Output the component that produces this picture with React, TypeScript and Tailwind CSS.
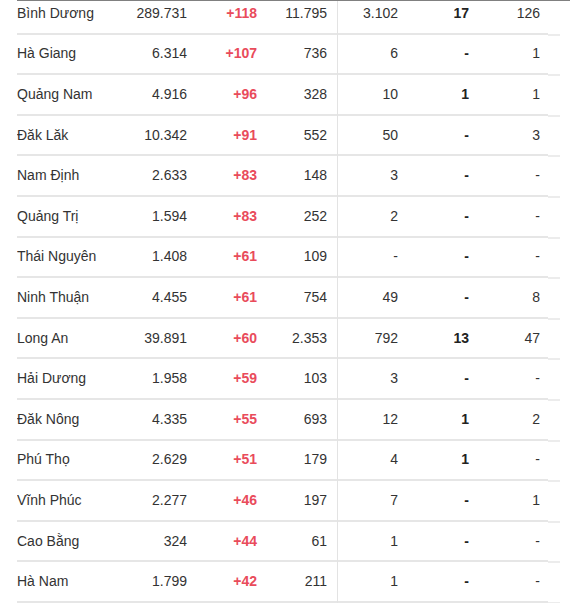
import React from "react";

type Row = [string, string, string, string, string, string, string];

const rows: Row[] = [
  ["Bình Dương", "289.731", "+118", "11.795", "3.102", "17", "126"],
  ["Hà Giang", "6.314", "+107", "736", "6", "-", "1"],
  ["Quảng Nam", "4.916", "+96", "328", "10", "1", "1"],
  ["Đăk Lăk", "10.342", "+91", "552", "50", "-", "3"],
  ["Nam Định", "2.633", "+83", "148", "3", "-", "-"],
  ["Quảng Trị", "1.594", "+83", "252", "2", "-", "-"],
  ["Thái Nguyên", "1.408", "+61", "109", "-", "-", "-"],
  ["Ninh Thuận", "4.455", "+61", "754", "49", "-", "8"],
  ["Long An", "39.891", "+60", "2.353", "792", "13", "47"],
  ["Hải Dương", "1.958", "+59", "103", "3", "-", "-"],
  ["Đăk Nông", "4.335", "+55", "693", "12", "1", "2"],
  ["Phú Thọ", "2.629", "+51", "179", "4", "1", "-"],
  ["Vĩnh Phúc", "2.277", "+46", "197", "7", "-", "1"],
  ["Cao Bằng", "324", "+44", "61", "1", "-", "-"],
  ["Hà Nam", "1.799", "+42", "211", "1", "-", "-"],
];

export default function App() {
  return (
    <div
      className="w-[570px] h-[603px] bg-white overflow-hidden text-[14px] text-[#333]"
      style={{ fontFamily: '"Liberation Sans", Arial, sans-serif' }}
    >
      <div className="ml-[17px] h-[603px] border-t border-[#808080] overflow-hidden">
        <div className="-mt-[7px]">
          {rows.map((r, i) => (
            <div key={i} className="flex h-[40.6px]">
              <div className="flex w-[320px] border-b-2 border-[#e6e6e6] items-center">
                <div className="w-[100px]">{r[0]}</div>
                <div className="w-[80px] text-right pr-[10px]">{r[1]}</div>
                <div className="w-[70px] text-right pr-[10px] font-bold text-[#e94b5b]">
                  {r[2]}
                </div>
                <div className="w-[70px] text-right pr-[10px]">{r[3]}</div>
              </div>
              <div className="w-px bg-[#e3e3e3]" />
              <div className="flex w-[210px] border-b-2 border-[#e6e6e6] items-center">
                <div className="w-[70px] text-right pr-[10px]">{r[4]}</div>
                <div className="w-[71px] text-right pr-[10px] font-bold text-[#222]">
                  {r[5]}
                </div>
                <div className="w-[69px] text-right pr-[8px]">{r[6]}</div>
              </div>
              <div className="w-[12px] border-b-2 border-[#ececec] -mb-px" />
            </div>
          ))}
        </div>
      </div>
    </div>
  );
}
